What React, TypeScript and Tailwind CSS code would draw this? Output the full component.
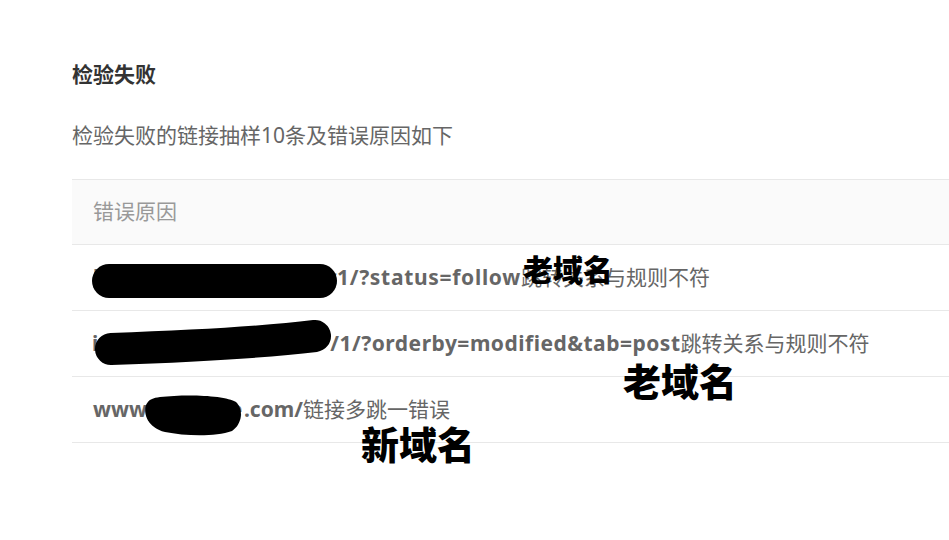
import React from "react";

const font = { fontFamily: '"Noto Sans", "Noto Sans CJK SC", sans-serif' };
const cjk = { fontFamily: '"Noto Sans CJK SC", sans-serif' };

export default function App() {
  return (
    <div
      className="relative w-[949px] h-[540px] overflow-hidden bg-white"
      style={font}
    >
      <div className="pl-[72px] pt-[58px]">
        <div className="text-[21px] leading-[32px] font-bold text-[#333]">检验失败</div>
        <div className="mt-[29px] text-[21px] leading-[32px] text-[#666]">
          检验失败的链接抽样10条及错误原因如下
        </div>
        <div className="mt-[28px] w-[900px] text-[21px] text-[#666]">
          <div className="h-[66px] flex items-center px-[21px] bg-[#fafafa] border-y border-[#e8e8e8] text-[#999]">
            错误原因
          </div>
          <div className="h-[66px] flex items-center px-[21px] border-b border-[#e8e8e8] whitespace-nowrap">
            <span className="inline-block w-[244px] overflow-hidden font-bold">https://www.example.com/</span>
            <span className="font-bold tracking-[0.7px]">1/?status=follow</span>
            <span>跳转关系与规则不符</span>
          </div>
          <div className="h-[66px] flex items-center px-[20px] border-b border-[#e8e8e8] whitespace-nowrap">
            <span className="font-bold">i</span>
            <span className="inline-block w-[232px] overflow-hidden font-bold">nfo.example.com</span>
            <span className="font-bold tracking-[0.5px]">/1/?orderby=modified&amp;tab=post</span>
            <span>跳转关系与规则不符</span>
          </div>
          <div className="h-[66px] flex items-center px-[21px] border-b border-[#e8e8e8] whitespace-nowrap">
            <span className="font-bold">www</span>
            <span className="inline-block w-[97px] overflow-hidden font-bold">.example</span>
            <span className="font-bold">.com/</span>
            <span>链接多跳一错误</span>
          </div>
        </div>
      </div>

      <svg
        className="absolute left-0 top-0 pointer-events-none"
        width="949"
        height="540"
        viewBox="0 0 949 540"
      >
        <rect x="92" y="264" width="245" height="34" rx="17" fill="#000" />
        <path
          d="M111 349 C 170 347, 250 344, 315 336"
          stroke="#000"
          strokeWidth="32"
          strokeLinecap="round"
          fill="none"
        />
        <path
          d="M160 397 C 185 394, 225 395, 236 402 C 244 410, 242 424, 232 431 C 215 437, 185 436, 165 432 C 148 428, 143 414, 146 405 C 149 399, 153 398, 160 397 Z"
          fill="#000"
        />
      </svg>

      <div className="absolute left-[523px] top-[253px] text-[30px] leading-none font-black text-black" style={cjk}>
        老域名
      </div>
      <div className="absolute left-[623px] top-[361px] text-[38px] leading-none font-black text-black" style={cjk}>
        老域名
      </div>
      <div className="absolute left-[361px] top-[424px] text-[38px] leading-none font-black text-black" style={cjk}>
        新域名
      </div>
    </div>
  );
}
